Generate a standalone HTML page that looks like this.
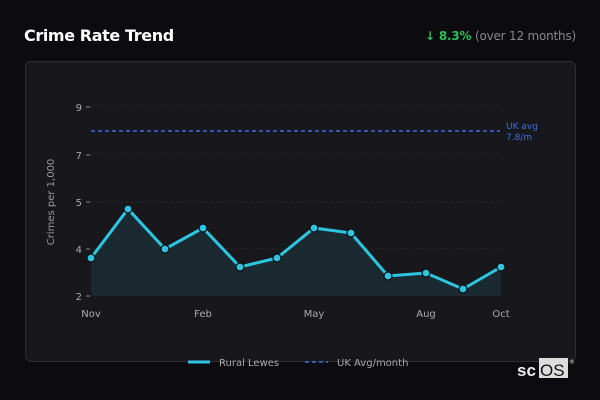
<!DOCTYPE html>
<html><head><meta charset="utf-8"><style>
body{margin:0;width:600px;height:400px;background:#0c0b10;font-family:"DejaVu Sans","Liberation Sans",sans-serif;overflow:hidden;position:relative}
.t{position:absolute;left:24px;top:26px;color:#fff;font-size:16px;font-weight:bold;letter-spacing:-0.4px}
.r{position:absolute;right:24px;top:29px;color:#888;font-size:12px;letter-spacing:-0.2px}
.r b{color:#2ebd59}
.card{position:absolute;left:25px;top:61px;width:549px;height:299px;background:#18171c;border:1px solid #2e2d33;border-radius:6px}
svg{position:absolute;left:0;top:0}
</style></head><body>
<div class="t">Crime Rate Trend</div>
<div class="r"><b>↓ 8.3%</b> (over 12 months)</div>
<div class="card"></div>
<svg width="600" height="400" font-family="DejaVu Sans, Liberation Sans, sans-serif">
<g stroke="#2a2a2e" stroke-dasharray="2,3" stroke-width="1">
<line x1="91" y1="107" x2="500" y2="107"/><line x1="91" y1="155" x2="500" y2="155"/>
<line x1="91" y1="202" x2="500" y2="202"/><line x1="91" y1="249" x2="500" y2="249"/>
</g>
<g stroke="#888" stroke-width="1"><line x1="86" y1="107" x2="90" y2="107"/><line x1="86" y1="155" x2="90" y2="155"/><line x1="86" y1="202" x2="90" y2="202"/><line x1="86" y1="249" x2="90" y2="249"/><line x1="86" y1="296" x2="90" y2="296"/></g>
<g fill="#aaa" font-size="10" text-anchor="end"><text x="82" y="111">9</text><text x="82" y="159">7</text><text x="82" y="206">5</text><text x="82" y="253">4</text><text x="82" y="300">2</text></g>
<text transform="translate(54,202) rotate(-90)" fill="#999" font-size="10" text-anchor="middle">Crimes per 1,000</text>
<polygon fill="#1a2a30" points="91,296 91,258 128,209 165,249 203,228 240,267 277,258 314,228 351,233 388,276 426,273 463,289 501,267 501,296"/>
<line x1="91" y1="131" x2="500" y2="131" stroke="#3d6fe0" stroke-width="1.5" stroke-dasharray="4,3"/>
<text x="506" y="129" fill="#3d6fe0" font-size="9">UK avg</text><text x="506" y="140" fill="#3d6fe0" font-size="9">7.8/m</text>
<polyline fill="none" stroke="#2cc6e0" stroke-width="3" points="91,258 128,209 165,249 203,228 240,267 277,258 314,228 351,233 388,276 426,273 463,289 501,267"/>
<g fill="#2cc6e0" stroke="#0c0b10" stroke-width="1.2">
<circle cx="91" cy="258" r="4"/><circle cx="128" cy="209" r="4"/><circle cx="165" cy="249" r="4"/><circle cx="203" cy="228" r="4"/><circle cx="240" cy="267" r="4"/><circle cx="277" cy="258" r="4"/><circle cx="314" cy="228" r="4"/><circle cx="351" cy="233" r="4"/><circle cx="388" cy="276" r="4"/><circle cx="426" cy="273" r="4"/><circle cx="463" cy="289" r="4"/><circle cx="501" cy="267" r="4"/></g>
<g fill="#aaa" font-size="10" text-anchor="middle"><text x="91" y="317">Nov</text><text x="203" y="317">Feb</text><text x="314" y="317">May</text><text x="426" y="317">Aug</text><text x="501" y="317">Oct</text></g>
<line x1="188" y1="362" x2="210" y2="362" stroke="#2cc6e0" stroke-width="3"/>
<text x="219" y="366" fill="#aaa" font-size="10">Rural Lewes</text>
<line x1="305" y1="362" x2="328" y2="362" stroke="#3d6fe0" stroke-width="1.5" stroke-dasharray="4,3"/>
<text x="337" y="366" fill="#aaa" font-size="10">UK Avg/month</text>
<rect x="539" y="358" width="29" height="20" fill="#ddd"/>
<text x="517" y="376" fill="#eee" font-size="17" font-family="Liberation Sans, sans-serif" font-weight="bold">sc</text>
<text x="540" y="376" fill="#111" font-size="17" font-family="Liberation Sans, sans-serif">OS</text>
<text x="569" y="364" fill="#ccc" font-size="6">®</text>
</svg>
</body></html>
